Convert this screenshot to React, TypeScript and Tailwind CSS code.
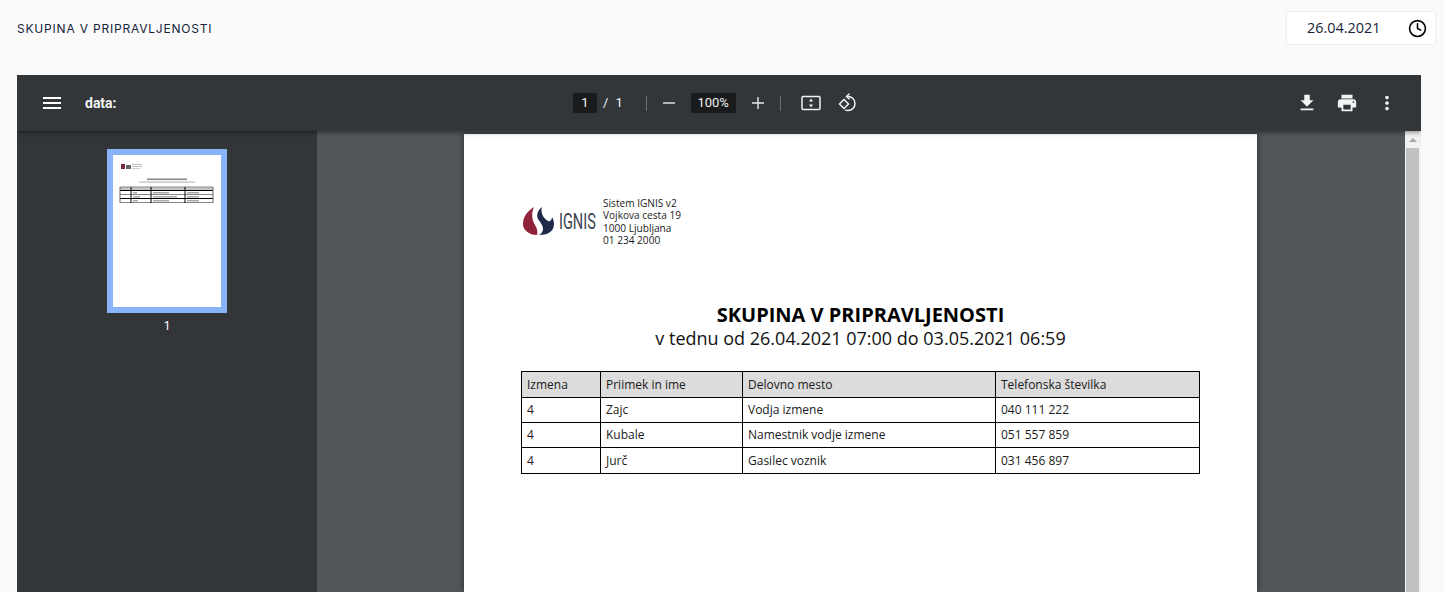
import { Clock } from "lucide-react";

const rows = [
  ["4", "Zajc", "Vodja izmene", "040 111 222"],
  ["4", "Kubale", "Namestnik vodje izmene", "051 557 859"],
  ["4", "Jurč", "Gasilec voznik", "031 456 897"],
];

function Icon({ d, className }: { d: string; className?: string }) {
  return (
    <svg viewBox="0 0 24 24" fill="currentColor" className={className}>
      <path d={d} />
    </svg>
  );
}

function Logo() {
  return (
    <div className="flex items-center mt-[9px] w-[80px] shrink-0">
      <svg viewBox="6 6 31 30" className="w-[31px] h-[30px] shrink-0">
        <path d="M17 7C11 11 6 16 6 24c0 6 6 11 14 11 1-3 0-7-2-10-3-5-4-11-1-18z" fill="#8f2338" />
        <path d="M25 7c-4 3-6 8-4 12 2 3 5 6 5 10 0 3-2 5-4 6 8 0 15-3 15-11 0-3-1-5-2-7 0 3-2 5-4 4-4-2-8-8-6-14z" fill="#1f2a4a" />
      </svg>
      <span className="ml-[5px] mt-[2px] text-[22px] leading-none text-[#3a4150] font-['Roboto',sans-serif] origin-left scale-x-[0.66] inline-block">
        IGNIS
      </span>
    </div>
  );
}

function Thumbnail() {
  return (
    <div className="w-[120px] h-[164px] bg-[#8ab4f8] p-[6px]">
      <div className="h-full bg-white">
        <svg viewBox="0 0 108 152" className="w-[108px] h-[152px]">
          <rect x="8" y="9" width="4" height="5" fill="#7a2a40" />
          <rect x="13" y="10" width="5" height="4" fill="#666" />
          <rect x="19" y="9" width="10" height="1" fill="#bbb" />
          <rect x="19" y="11" width="10" height="1" fill="#bbb" />
          <rect x="19" y="13" width="8" height="1" fill="#ccc" />
          <rect x="34" y="23.500" width="40" height="1.6" fill="#888" />
          <rect x="26" y="26.500" width="56" height="1.200" fill="#bbb" />
          <rect x="7" y="32" width="93" height="3.500" fill="#c4c4c4" />
          <g fill="#aaa">
            <rect x="20" y="37" width="4" height="1.500" />
            <rect x="40" y="37" width="16" height="1.500" />
            <rect x="74" y="37" width="12" height="1.500" />
            <rect x="20" y="41" width="7" height="1.500" />
            <rect x="40" y="41" width="24" height="1.500" />
            <rect x="74" y="41" width="12" height="1.500" />
            <rect x="20" y="45" width="5" height="1.500" />
            <rect x="40" y="45" width="16" height="1.500" />
            <rect x="74" y="45" width="12" height="1.500" />
          </g>
          <path d="M7 32h93M7 39.500h93M7 47.500h93" stroke="#888" strokeWidth="1" />
          <path d="M7 35.500h93M7 43.500h93M18 32v16M38 32v16M72 32v16" stroke="#000" strokeWidth="1" />
          <path d="M7 32v16M100 32v16" stroke="#666" strokeWidth="1" />
        </svg>
      </div>
    </div>
  );
}

function Toolbar() {
  return (
    <div className="relative z-10 h-[56px] shrink-0 bg-[#323639] flex items-center text-white font-['Roboto',sans-serif] shadow-[0_2px_4px_rgba(0,0,0,0.35)]">
      <div className="w-[556px] flex items-center pl-[23px] shrink-0">
        <Icon className="w-[24px] h-[24px]" d="M3 18h18v-2H3v2zm0-5h18v-2H3v2zm0-7v2h18V6H3z" />
        <span className="ml-[21px] text-[14px] font-bold text-[#f1f3f4]">data:</span>
      </div>
      <div className="flex items-center text-[13px] text-[#f1f3f4]">
        <span className="w-[24px] h-[20px] bg-[#191b1c] flex items-center justify-center">1</span>
        <span className="ml-[6px]">/</span>
        <span className="ml-[7px]">1</span>
        <span className="ml-[23px] w-px h-[15px] bg-[#6b6f72]" />
        <svg viewBox="0 0 14 14" className="ml-[15px] w-[14px] h-[14px]" fill="none" stroke="#e8eaed" strokeWidth="1.4">
          <path d="M1 7h12" />
        </svg>
        <span className="ml-[15px] w-[45px] h-[20px] bg-[#191b1c] flex items-center justify-center">100%</span>
        <svg viewBox="0 0 14 14" className="ml-[15px] w-[14px] h-[14px]" fill="none" stroke="#e8eaed" strokeWidth="1.4">
          <path d="M1 7h12M7 1v12" />
        </svg>
        <span className="ml-[15px] w-px h-[15px] bg-[#6b6f72]" />
        <svg viewBox="0 0 20 16" className="ml-[20px] w-[20px] h-[16px]" fill="none" stroke="#f1f3f4" strokeWidth="1.5">
          <rect x="1" y="1.500" width="18" height="13" rx="1" />
          <path d="M10 3.500L8 6.500h4zM10 12.500L8 9.500h4z" fill="#f1f3f4" stroke="none" />
        </svg>
        <svg viewBox="0 0 20 20" className="ml-[16px] w-[20px] h-[20px]" fill="none" stroke="#f1f3f4" strokeWidth="1.5">
          <path d="M7 6.500L2.500 11 7 15.500l4.500-4.500z" />
          <path d="M10.500 3.500c4-.4 7.500 2.700 7.500 7 0 4-3.200 7-7 7-1 0-2-.2-2.800-.6" />
          <path d="M12.500 .8L9.500 3.500l3 2.800" />
        </svg>
      </div>
      <div className="ml-auto flex items-center gap-[18px] pr-[23px] text-[#f1f3f4]">
        <Icon className="w-[22px] h-[22px]" d="M19 9h-4V3H9v6H5l7 7 7-7zM5 18v2h14v-2H5z" />
        <Icon className="w-[22px] h-[22px]" d="M19 8H5c-1.66 0-3 1.34-3 3v6h4v4h12v-4h4v-6c0-1.66-1.34-3-3-3zm-3 11H8v-5h8v5zm3-7c-.55 0-1-.45-1-1s.45-1 1-1 1 .45 1 1-.45 1-1 1zm-1-9H6v4h12V3z" />
        <Icon className="w-[22px] h-[22px]" d="M12 8c1.1 0 2-.9 2-2s-.9-2-2-2-2 .9-2 2 .9 2 2 2zm0 2c-1.1 0-2 .9-2 2s.9 2 2 2 2-.9 2-2-.9-2-2-2zm0 6c-1.1 0-2 .9-2 2s.9 2 2 2 2-.9 2-2-.9-2-2-2z" />
      </div>
    </div>
  );
}

function DocTable() {
  const cell = "border border-black px-[5px] text-left font-normal align-middle";
  return (
    <table className="mt-[23px] w-[678px] table-fixed border-collapse text-[12px] text-[#1a1a1a]">
      <colgroup>
        <col className="w-[79px]" />
        <col className="w-[142px]" />
        <col className="w-[253px]" />
        <col className="w-[204px]" />
      </colgroup>
      <thead>
        <tr className="h-[26px] bg-[#dcdcdc]">
          <th className={cell}>Izmena</th>
          <th className={cell}>Priimek in ime</th>
          <th className={cell}>Delovno mesto</th>
          <th className={cell}>Telefonska številka</th>
        </tr>
      </thead>
      <tbody>
        {rows.map((row) => (
          <tr key={row[1]} className="h-[25px] last:h-[26px]">
            {row.map((v, i) => (
              <td key={i} className={cell}>
                {v}
              </td>
            ))}
          </tr>
        ))}
      </tbody>
    </table>
  );
}

export default function App() {
  return (
    <div className="h-[592px] w-[1444px] overflow-hidden bg-[#fafafa] flex flex-col">
      <header className="h-[75px] shrink-0 flex items-start justify-between pl-[17px] pr-[8px]">
        <h1 className="mt-[22px] text-[12px] leading-[14px] tracking-[0.8px] text-[#16233a] font-['Inter',sans-serif]">
          SKUPINA V PRIPRAVLJENOSTI
        </h1>
        <div className="mt-[11px] w-[150px] h-[34px] bg-white border border-[#efefef] flex items-center justify-between pl-[20px] pr-[8px] font-['Open_Sans',sans-serif] text-[14.4px] text-[#16233a]">
          <span>26.04.2021</span>
          <Clock className="w-[19px] h-[19px] text-black" strokeWidth={2} />
        </div>
      </header>

      <div className="mx-[17px] w-[1404px] flex-1 min-h-0 flex flex-col bg-[#525659] overflow-hidden">
        <Toolbar />
        <div className="flex flex-1 min-h-0">
          <aside className="w-[300px] shrink-0 bg-[#323639] flex flex-col items-center pt-[18px]">
            <Thumbnail />
            <span className="mt-[4px] text-[12px] text-white font-['Roboto',sans-serif]">1</span>
          </aside>
          <main className="flex-1 min-w-0 flex justify-center">
            <div className="ml-[-1px] w-[793px] bg-white shadow-[0_0_6px_rgba(0,0,0,0.5)] mt-[3px] px-[57px] pt-[63px] font-['Open_Sans',sans-serif] text-[#111]">
              <div className="flex items-start pl-[2px]">
                <Logo />
                <div className="text-[10.1px] leading-[12.3px] text-[#1a1a1a]">
                  <div>Sistem IGNIS v2</div>
                  <div>Vojkova cesta 19</div>
                  <div>1000 Ljubljana</div>
                  <div>01 234 2000</div>
                </div>
              </div>
              <div className="mt-[56px] text-center">
                <div className="text-[20px] leading-[26px] font-bold text-black">SKUPINA V PRIPRAVLJENOSTI</div>
                <div className="text-[18px] leading-[20px] text-[#111]">v tednu od 26.04.2021 07:00 do 03.05.2021 06:59</div>
              </div>
              <DocTable />
            </div>
          </main>
          <div className="w-[16px] shrink-0 bg-[#f1f1f1] flex flex-col items-center pt-[7px]">
            <span className="w-0 h-0 border-x-[4px] border-x-transparent border-b-[4px] border-b-[#a3a3a3]" />
            <span className="mt-[6px] ml-[-1px] w-[13px] flex-1 bg-[#c1c1c1]" />
          </div>
        </div>
      </div>
    </div>
  );
}
